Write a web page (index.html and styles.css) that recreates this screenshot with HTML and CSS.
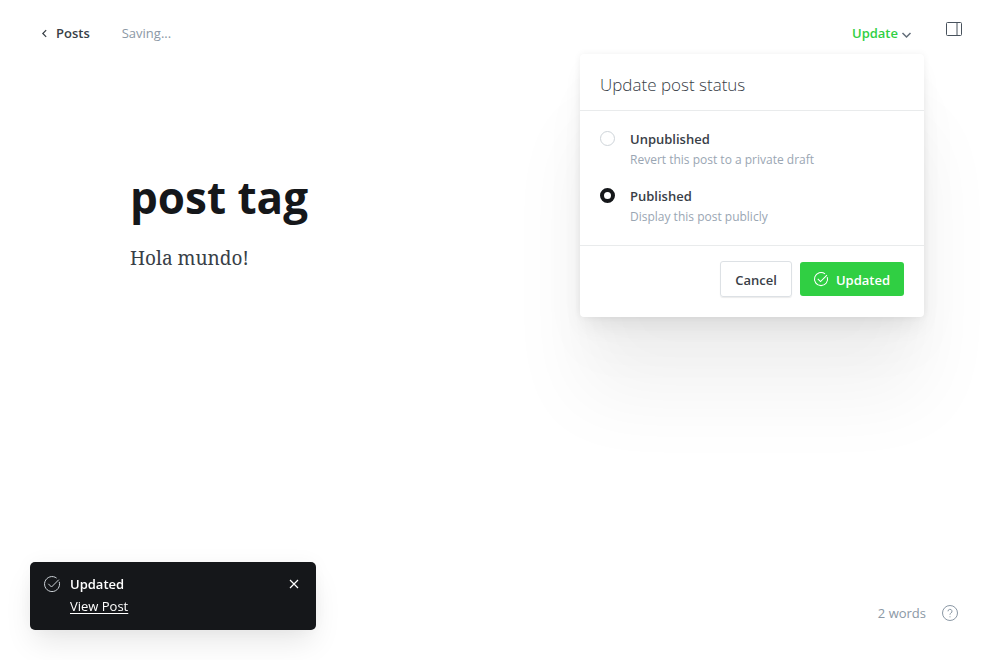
FILE: index.html
```html
<!DOCTYPE html>
<html lang="en">
<head>
<meta charset="utf-8">
<meta name="viewport" content="width=device-width, initial-scale=1">
<title>post tag</title>
<link rel="stylesheet" href="styles.css">
</head>
<body>
<div class="editor">
  <header class="topbar">
    <a class="back" href="#">
      <svg class="back-icon" viewBox="0 0 6 10" aria-hidden="true"><path d="M5 1 1 5l4 4"/></svg>
      Posts
    </a>
    <span class="saving">Saving...</span>
    <div class="publish">
      <button class="publish-trigger" type="button" aria-expanded="true">
        Update
        <svg class="chevron" viewBox="0 0 9 6" aria-hidden="true"><path d="m.5 1 4 4 4-4"/></svg>
      </button>
      <form class="menu">
        <h2 class="menu-title">Update post status</h2>
        <div class="menu-body">
          <label class="option">
            <input class="radio" type="radio" name="status">
            <span class="option-text"><span class="option-name">Unpublished</span><span class="option-note">Revert this post to a private draft</span></span>
          </label>
          <label class="option">
            <input class="radio" type="radio" name="status" checked>
            <span class="option-text"><span class="option-name">Published</span><span class="option-note">Display this post publicly</span></span>
          </label>
        </div>
        <div class="menu-footer">
          <button class="btn btn-outline" type="button">Cancel</button>
          <button class="btn btn-green" type="button">
            <svg class="btn-icon" viewBox="0 0 16 16" aria-hidden="true"><path d="M15.200 5.800A7.500 7.500 0 1 1 12.600 2.100M4.300 7.800l3.200 3.200 7.300-7.300"/></svg>
            Updated
          </button>
        </div>
      </form>
    </div>
    <button class="settings" type="button" aria-label="Settings">
      <svg class="settings-icon" viewBox="0 0 16 14" aria-hidden="true"><rect x=".5" y=".5" width="15" height="13" rx="1"/><path d="M11 .5v13"/></svg>
    </button>
  </header>
  <main class="content">
    <h1 class="title">post tag</h1>
    <p class="text">Hola mundo!</p>
  </main>
  <footer class="statusbar">
    <span class="words">2 words</span>
    <a class="help" href="#" aria-label="Help">
      <svg class="help-icon" viewBox="0 0 16 16" aria-hidden="true"><circle cx="8" cy="8" r="7.500"/><path d="M6 6.300a2 2 0 1 1 2.900 1.800c-.6.300-.9.700-.9 1.300v.4"/><path d="M8 11.300v1"/></svg>
    </a>
  </footer>
  <aside class="toast" role="status">
    <svg class="toast-icon" viewBox="0 0 16 16" aria-hidden="true"><path d="M15.200 5.800A7.500 7.500 0 1 1 12.600 2.100M4.300 7.800l3.200 3.200 7.300-7.300"/></svg>
    <div class="toast-text">
      <strong class="toast-title">Updated</strong>
      <a class="toast-link" href="#">View Post</a>
    </div>
    <button class="toast-close" type="button" aria-label="Close">
      <svg class="close-icon" viewBox="0 0 8 8" aria-hidden="true"><path d="m0 0 8 8M8 0 0 8"/></svg>
    </button>
  </aside>
</div>
</body>
</html>
```
FILE: styles.css
```css
* { box-sizing: border-box; }
body {
  margin: 0;
  background: #fff;
  color: #394047;
  font: 13px/20px "Open Sans", "Noto Sans", sans-serif;
}
button { margin: 0; padding: 0; border: 0; background: none; font: inherit; color: inherit; cursor: pointer; }
svg { display: block; fill: none; stroke: currentColor; overflow: visible; }

.editor { display: flex; flex-direction: column; min-height: 100vh; }
.topbar { display: flex; align-items: flex-start; padding: 23px 38px 0 42px; }
.back { display: flex; align-items: center; gap: 9px; color: #394047; font-weight: 600; text-decoration: none; }
.back-icon { width: 5px; height: 9px; stroke-width: 1.5; }
.saving { margin-left: 32px; color: #8b98a5; }
.publish { position: relative; margin-left: auto; padding-right: 13px; }
.publish-trigger { display: flex; align-items: center; gap: 4px; color: #30cf43; font-weight: 600; }
.chevron { width: 9px; height: 6px; margin-top: 3px; color: #626d79; stroke-width: 1.5; }
.settings { margin: -1px 0 0 22px; color: #48525d; }
.settings-icon { width: 16px; height: 14px; }

.menu {
  position: absolute;
  top: 31px;
  right: 0;
  width: 344px;
  border-radius: 4px;
  background: #fff;
  box-shadow: 0 0 7px rgba(0,0,0,.06), 0 12px 20px -4px rgba(0,0,0,.07), 0 35px 50px -4px rgba(0,0,0,.03), 0 80px 80px rgba(0,0,0,.05);
}
.menu-title { margin: 0; padding: 19px 20px 13px; border-bottom: 1px solid #e9ebec; font-size: 17px; line-height: 24px; font-weight: 300; }
.menu-body { display: grid; gap: 16px; padding: 18px 20px 18px; }
.option { display: flex; gap: 15px; cursor: pointer; }
.radio { appearance: none; flex: none; width: 15px; height: 15px; margin: 2px 0 0; border: 1px solid #ced4d9; border-radius: 50%; background: #fff; }
.radio:checked { border: 4px solid #15171a; }
.option-text { display: grid; row-gap: 1px; }
.option-name { font-weight: 600; }
.option-note { color: #9aa6b3; font-size: 12px; }
.menu-footer { display: flex; justify-content: flex-end; align-items: center; gap: 8px; padding: 15px 20px 20px; border-top: 1px solid #e9ebec; }
.btn { display: flex; align-items: center; gap: 8px; height: 34px; padding: 2px 14px 0; border-radius: 3px; font-weight: 600; }
.btn-outline { height: 36px; border: 1px solid #dde1e5; box-shadow: 0 1px 1px rgba(0,0,0,.08); }
.btn-green { background: #30cf43; color: #fff; }
.btn-icon { width: 14px; height: 14px; margin-top: -2px; stroke-width: 1.2; }

.content { flex: 1; padding: 122px 130px 0; }
.title { margin: 0; color: #15171a; font-size: 44px; line-height: 64px; font-weight: 700; }
.text { margin: 13px 0 0; font: 19px/32px "Noto Serif", "Liberation Serif", serif; }

.statusbar { display: flex; justify-content: flex-end; align-items: center; gap: 16px; padding: 0 42px 37px; color: #8b98a5; }
.help { color: #8b98a5; }
.help-icon { width: 16px; height: 16px; }

.toast {
  position: fixed;
  left: 30px;
  bottom: 30px;
  display: flex;
  align-items: flex-start;
  gap: 10px;
  width: 286px;
  padding: 11px 17px 13px 14px;
  border-radius: 5px;
  background: #15171a;
  color: #fff;
  box-shadow: 0 0 20px rgba(0,0,0,.04), 0 15px 30px -4px rgba(0,0,0,.1);
}
.toast-icon { width: 16px; height: 16px; margin-top: 3px; color: #ced4d9; }
.toast-text { display: grid; flex: 1; line-height: 22px; }
.toast-title { font-weight: 600; }
.toast-link { justify-self: start; color: #fff; text-underline-offset: 2px; }
.toast-close { padding: 7px 1px; }
.close-icon { width: 8px; height: 8px; stroke-width: 1.2; }
```
